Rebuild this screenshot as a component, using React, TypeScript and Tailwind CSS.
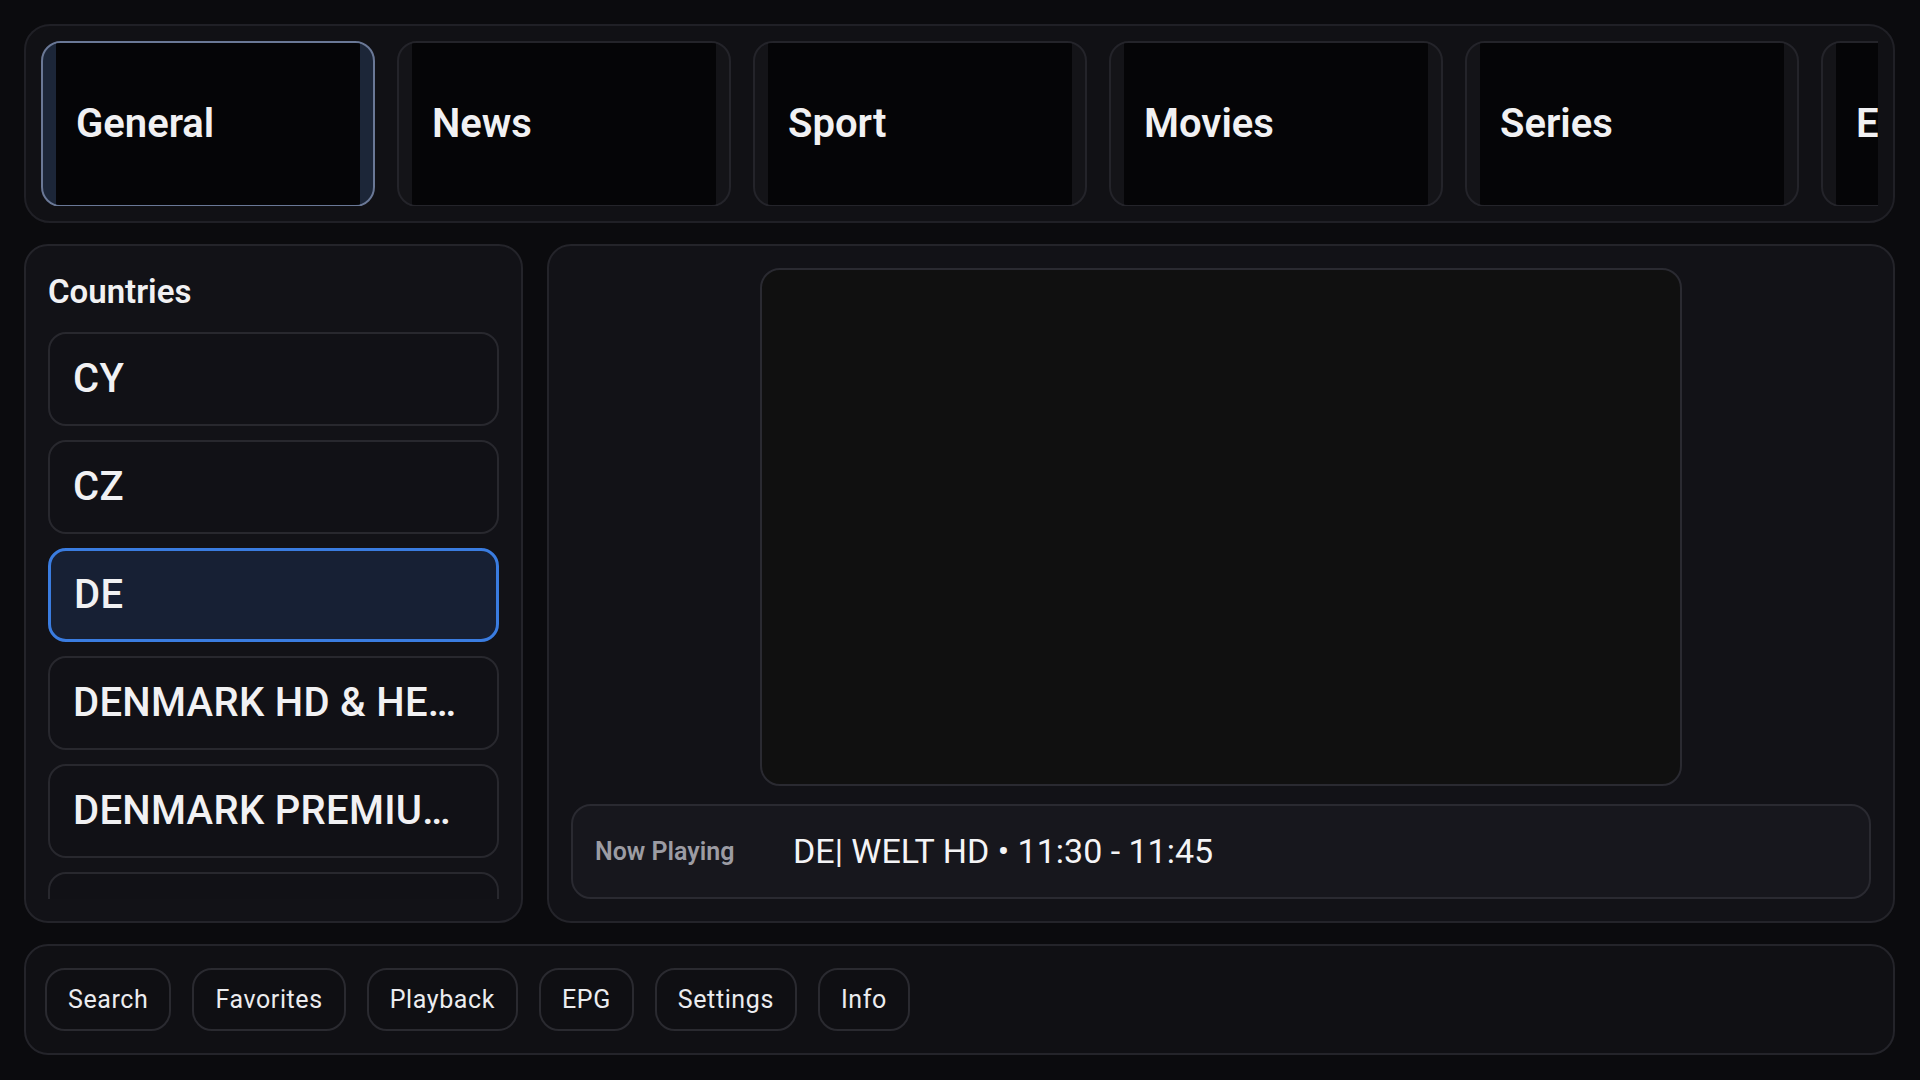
const tabs = ['General', 'News', 'Sport', 'Movies', 'Series', 'Entertainment'];
const countries = ['CY', 'CZ', 'DE', 'DENMARK HD & HEVC', 'DENMARK PREMIUM HD', 'DENMARK SD & Backup'];
const actions = ['Search', 'Favorites', 'Playback', 'EPG', 'Settings', 'Info'];

export default function App() {
  const tab = 'General';
  const country = 'DE';
  return <div className="flex h-[1080px] w-[1920px] flex-col gap-[21px] overflow-hidden bg-[#0b0b0e] pb-[25px] pl-[24px] pr-[25px] pt-[24px] font-['Roboto',sans-serif] text-[#f1f1f3]">
    <div className="h-[199px] shrink-0 rounded-[26px] border-2 border-[#202026] bg-[#111115] px-[15px] py-[15px]">
      <div className="flex h-full gap-[22px] overflow-hidden">
        {tabs.map(t => <div key={t} className={`h-[166px] w-[334px] shrink-0 overflow-hidden rounded-[20px] border-2 px-[13px] ${tab===t?'border-[#6a7896] bg-[#1c2638]':'border-[#24242a] bg-[#141418]'}`}>
          <div className="flex h-full items-center bg-[#050507] pl-[20px]">
            <span className="text-[40px] font-semibold">{t}</span>
          </div>
        </div>)}
      </div>
    </div>

    <div className="flex min-h-0 flex-1 gap-[24px]">
      <aside className="flex w-[499px] shrink-0 flex-col rounded-[24px] border-2 border-[#24242a] bg-[#121217] px-[22px] pb-[22px] pt-[27px]">
        <h2 className="mb-[21px] text-[33px] font-semibold leading-[38px]">Countries</h2>
        <div className="flex min-h-0 flex-1 flex-col gap-[14px] overflow-hidden">
          {countries.map(c => <div key={c} className={`flex h-[94px] shrink-0 items-center rounded-[18px] px-[23px] ${country===c?'border-[3px] border-[#3a7ce0] bg-[#172034]':'border-2 border-[#28282e] bg-[#111116]'}`}>
            <span className="truncate text-[40px] font-medium tracking-[0.3px]">{c}</span>
          </div>)}
        </div>
      </aside>

      <section className="flex min-w-0 flex-1 flex-col items-center rounded-[24px] border-2 border-[#24242a] bg-[#121217] p-[22px]">
        <div className="h-[518px] w-[922px] shrink-0 rounded-[20px] border-2 border-[#2a2a31] bg-[#101010]" />
        <div className="mt-[18px] flex h-[95px] w-full shrink-0 items-center rounded-[20px] border-2 border-[#2a2a31] bg-[#17171d] px-[22px]">
          <span className="w-[198px] shrink-0 text-[25px] font-semibold text-[#9c9ca3]">Now Playing</span>
          <span className="text-[34px] text-[#f4f4f6]">DE| WELT HD • 11:30 - 11:45</span>
        </div>
      </section>
    </div>

    <div className="flex h-[111px] shrink-0 items-center gap-[21px] rounded-[24px] border-2 border-[#24242a] bg-[#101014] px-[19px]">
      {actions.map(a => <button key={a} className="h-[63px] rounded-[20px] border-2 border-[#2a2a30] bg-[#0f0f13] px-[21px] text-[25px] tracking-[0.6px] text-[#ececef]">{a}</button>)}
    </div>
  </div>;
}
